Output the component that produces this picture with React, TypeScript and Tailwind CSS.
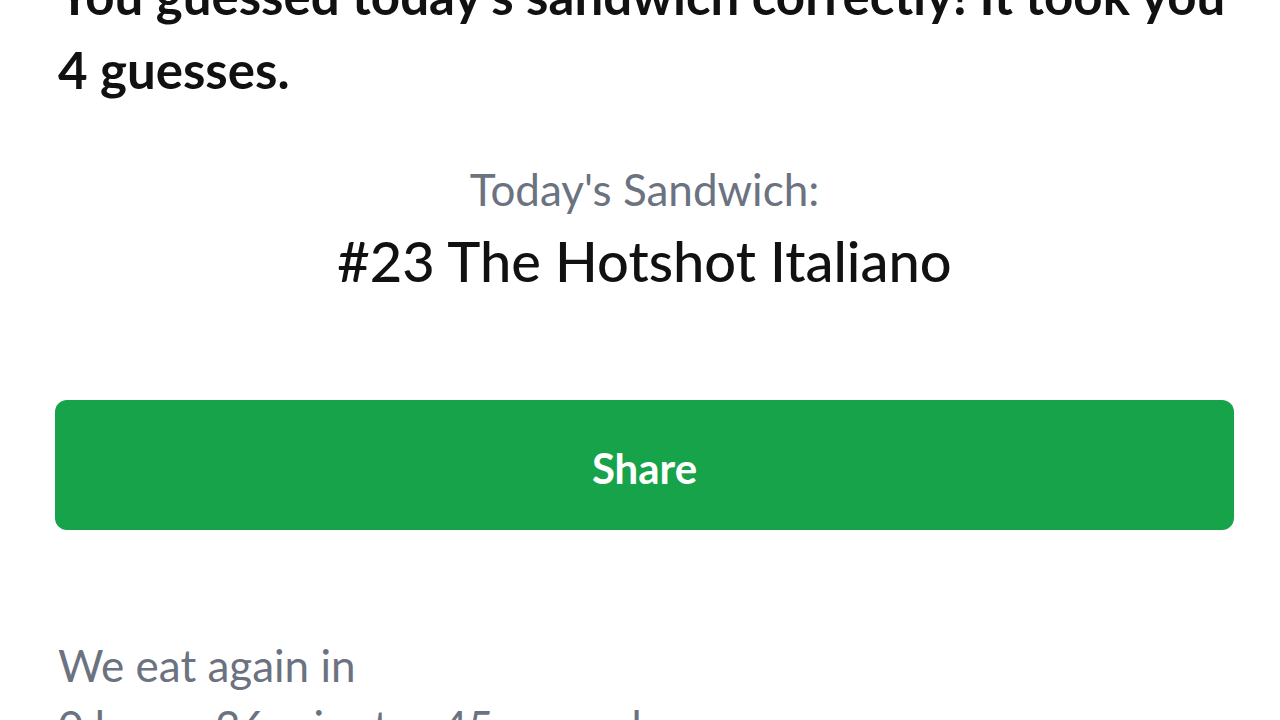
export default function App() {
  return (
    <div className="min-h-screen bg-white font-['Lato','Liberation_Sans',sans-serif] overflow-hidden">
      <div className="pl-[55px] pr-[46px] flex flex-col">
        {/* Result message */}
        <p className="-mt-[41px] pl-[3px] text-[51px] leading-[74px] font-bold text-[#111]">
          You guessed today's sandwich correctly! It took you 4 guesses.
        </p>

        {/* Today's sandwich */}
        <div className="mt-[54px] flex flex-col items-center text-center">
          <div className="text-[44px] leading-[56px] text-[#6b7280]">Today's Sandwich:</div>
          <div className="mt-[12px] text-[56px] leading-[64px] font-medium text-[#111]">
            #23 The Hotshot Italiano
          </div>
        </div>

        {/* Share */}
        <button className="mt-[107px] h-[130px] w-full rounded-[12px] bg-[#16a34a] pt-[6px] text-white text-[42px] font-bold flex items-center justify-center">
          Share
        </button>

        {/* Countdown */}
        <div className="mt-[105px] pl-[3px] text-[44px] leading-[61px] text-[#6b7280]">
          <div>We eat again in</div>
          <div>0 hours 36 minutes 45 seconds</div>
        </div>
      </div>
    </div>
  )
}
